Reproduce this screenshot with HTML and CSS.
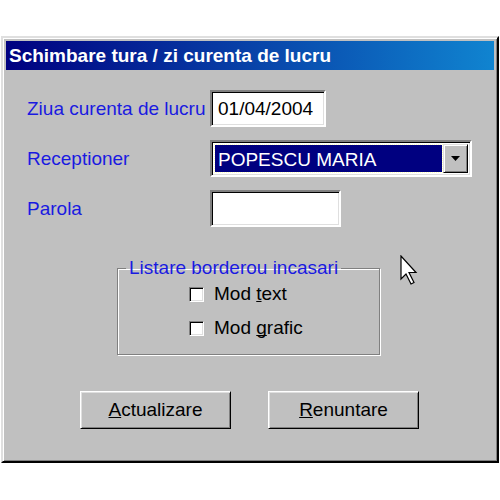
FILE: index.html
```html
<!DOCTYPE html>
<html lang="ro">
<head>
    <meta charset="UTF-8">
    <title>Schimbare tura / zi curenta de lucru</title>
    <link rel="stylesheet" href="styles.css">
</head>
<body>
    <div class="window">
        <div class="title-bar">Schimbare tura / zi curenta de lucru</div>
        <div class="content">
            <div class="form">
                <label class="label">Ziua curenta de lucru</label>
                <div class="field date-field">01/04/2004</div>

                <label class="label">Receptioner</label>
                <div class="field combo">
                    <div class="combo-value"><span>POPESCU MARIA</span></div>
                    <div class="combo-button">
                        <svg width="9" height="5" viewBox="0 0 9 5"><path d="M0 0h9L4.5 5z" fill="#000"/></svg>
                    </div>
                </div>

                <label class="label">Parola</label>
                <div class="field password-field"></div>
            </div>

            <fieldset class="group">
                <legend>Listare borderou incasari</legend>
                <div class="check-row"><span class="checkbox"></span><span>Mod <u>t</u>ext</span></div>
                <div class="check-row"><span class="checkbox"></span><span>Mod <u>g</u>rafic</span></div>
            </fieldset>

            <div class="buttons">
                <button class="btn"><u>A</u>ctualizare</button>
                <button class="btn"><u>R</u>enuntare</button>
            </div>
        </div>

        <svg class="cursor" width="18" height="30" viewBox="0 0 18 30">
            <path d="M1 1v23l5-5 5 10 3-1.5-5-10h7z" fill="#fff" stroke="#000" stroke-width="1.2"/>
        </svg>
    </div>
</body>
</html>
```

FILE: styles.css
```css
body {
    margin: 0;
    background: #fff;
    font-family: "Liberation Sans", Arial, sans-serif;
}

u {
    text-decoration-skip-ink: none;
}

.window {
    position: relative;
    box-sizing: border-box;
    width: 498px;
    height: 427px;
    margin: 36px 0 0 1px;
    padding: 3px;
    background: #c0c0c0;
    border: 2px solid;
    border-color: #dfdfdf #000 #000 #dfdfdf;
    box-shadow: inset 1px 1px 0 #fff, inset -1px -1px 0 #808080;
}

.title-bar {
    height: 29px;
    padding-left: 3px;
    line-height: 29px;
    font-size: 19px;
    font-weight: bold;
    color: #fff;
    background: linear-gradient(90deg, #000080, #1084d0);
}

.content {
    padding: 20px 0 0 21px;
}

.form {
    display: grid;
    grid-template-columns: 183px auto;
    row-gap: 13px;
    align-items: center;
}

.label {
    color: #1a1ae0;
    font-size: 19px;
}

.field {
    box-sizing: border-box;
    height: 37px;
    background: #fff;
    border: 2px solid;
    border-color: #808080 #fff #fff #808080;
    box-shadow: inset 1px 1px 0 #000, inset -1px -1px 0 #dfdfdf;
    font-size: 19px;
}

.date-field {
    width: 116px;
    padding: 6px 0 0 6px;
}

.password-field {
    width: 131px;
}

.combo {
    display: flex;
    width: 262px;
    padding: 2px;
}

.combo-value {
    flex: 1;
    padding: 1px;
}

.combo-value span {
    display: block;
    height: 100%;
    box-sizing: border-box;
    padding: 4px 0 0 3px;
    background: #000080;
    color: #fff;
    outline: 1px dotted #ffffc0;
}

.combo-button {
    display: flex;
    align-items: center;
    justify-content: center;
    width: 23px;
    background: #c0c0c0;
    border: 1px solid;
    border-color: #dfdfdf #000 #000 #dfdfdf;
    box-shadow: inset 1px 1px 0 #fff, inset -1px -1px 0 #808080;
}

.group {
    width: 263px;
    min-width: 0;
    box-sizing: border-box;
    margin: 33px 0 0 90px;
    padding: 8px 0 16px 0;
    border: 1px solid #808080;
    box-shadow: 1px 1px 0 #fff, inset 1px 1px 0 #fff;
}

.group legend {
    padding: 0 3px;
    margin-left: 8px;
    color: #1a1ae0;
    font-size: 19px;
    line-height: 16px;
    white-space: nowrap;
}

.check-row {
    display: flex;
    align-items: center;
    gap: 10px;
    height: 20px;
    padding-left: 71px;
    font-size: 19px;
}

.check-row + .check-row {
    margin-top: 14px;
}

.checkbox {
    box-sizing: border-box;
    width: 15px;
    height: 15px;
    background: #fff;
    border: 1px solid;
    border-color: #808080 #fff #fff #808080;
    box-shadow: inset 1px 1px 0 #000, inset -1px -1px 0 #dfdfdf;
}

.buttons {
    display: flex;
    gap: 37px;
    margin: 36px 0 0 53px;
}

.btn {
    box-sizing: border-box;
    width: 151px;
    height: 38px;
    padding: 0;
    background: #c0c0c0;
    border: 1px solid;
    border-color: #fff #000 #000 #fff;
    box-shadow: inset 1px 1px 0 #dfdfdf, inset -1px -1px 0 #808080;
    font-family: "Liberation Sans", Arial, sans-serif;
    font-size: 19px;
    color: #000;
}

.cursor {
    position: absolute;
    left: 397px;
    top: 217px;
}
```
